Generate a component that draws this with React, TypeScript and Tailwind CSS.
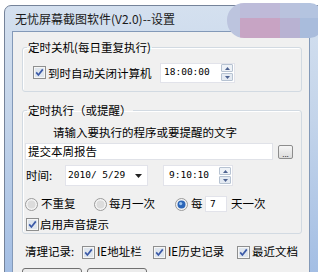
import React from 'react';

const cjk = { fontFamily: '"Noto Sans CJK SC", "Noto Sans", sans-serif' };
const mono = { fontFamily: '"DejaVu Sans Mono", "Liberation Mono", monospace' };

// Win7-style checked checkbox
function Check() {
  return (
    <svg width="13" height="13" viewBox="0 0 13 13" className="shrink-0">
      <rect x="0.5" y="0.5" width="12" height="12" fill="#f6f6f6" stroke="#8e8f8f" />
      <rect x="2" y="2" width="9" height="9" fill="#dfe6ee" />
      <path d="M3.2 6.4 L5.4 9 L9.8 3.4" stroke="#3b5aa8" strokeWidth="1.7" fill="none" />
    </svg>
  );
}

function Radio({ on = false }: { on?: boolean }) {
  return (
    <svg width="13" height="13" viewBox="0 0 13 13" className="shrink-0">
      <circle cx="6.5" cy="6.5" r="6" fill="#f4f4f4" stroke="#9a9a9a" />
      {on ? (
        <>
          <circle cx="6.5" cy="6.5" r="4" fill="#2c66b8" />
          <circle cx="5.7" cy="5.6" r="1.6" fill="#9cc4ee" />
        </>
      ) : (
        <circle cx="6.5" cy="6.5" r="4" fill="#dcdcdc" />
      )}
    </svg>
  );
}

function Spinner() {
  return (
    <div className="flex flex-col gap-[1px] w-[12px] shrink-0">
      <div className="h-[8px] border border-[#b7c3d2] bg-[#eef2f7] rounded-[1px] flex items-center justify-center">
        <svg width="5" height="3" viewBox="0 0 5 3"><path d="M0 3 L2.5 0 L5 3 Z" fill="#4d6290" /></svg>
      </div>
      <div className="h-[8px] border border-[#b7c3d2] bg-[#e4eaf2] rounded-[1px] flex items-center justify-center">
        <svg width="5" height="3" viewBox="0 0 5 3"><path d="M0 0 L2.5 3 L5 0 Z" fill="#4d6290" /></svg>
      </div>
    </div>
  );
}

export default function App() {
  return (
    <div className="w-[318px] h-[272px] bg-white overflow-hidden relative text-black" style={cjk}>
      <div className="ml-[4px] mt-[5px] w-[324px] h-[290px] rounded-t-[7px] border border-[#75839a] bg-[linear-gradient(180deg,#d4e0ef_0%,#c3d4ea_40%,#9fbbe3_100%)] flex flex-col">
        {/* title bar */}
        <div className="h-[25px] pl-[10px] pt-[1px] flex items-center text-[12px] leading-none text-[#1a1a1a]">
          无忧屏幕截图软件(V2.0)--设置
        </div>

        {/* client area */}
        <div className="ml-[7px] w-[298px] flex-1 border border-[#8399b8] bg-[#f0f0f0] flex flex-col text-[11.5px]">
          {/* group 1 */}
          <fieldset className="ml-[9px] mt-[9px] w-[280px] rounded-[3px] border border-[#d2dae2] shadow-[inset_1px_1px_0_#ffffff] px-0">
            <legend className="ml-[4px] px-[1px] leading-[12px]">定时关机(每日重复执行)</legend>
            <div className="pl-[10px] pt-[9px] pb-[8px] flex items-center h-[38px]">
              <Check />
              <span className="ml-[2px] w-[112px] leading-[14px]">到时自动关闭计算机</span>
              <div className="w-[75px] h-[20px] bg-white border border-[#e2e3ea] flex items-center pl-[3px] pr-[1px]">
                <span className="flex-1 text-[9.5px]" style={mono}>18:00:00</span>
                <Spinner />
              </div>
            </div>
          </fieldset>

          {/* group 2 */}
          <fieldset className="ml-[9px] mt-[12px] w-[280px] rounded-[3px] border border-[#d2dae2] shadow-[inset_1px_1px_0_#ffffff] px-0">
            <legend className="ml-[4px] px-[1px] leading-[12px]">定时执行（或提醒）</legend>
            <div className="flex flex-col pl-[2px] pb-[2px]">
              <div className="mt-[9px] pl-[28px] leading-[14px]">请输入要执行的程序或要提醒的文字</div>
              <div className="mt-[4px] flex items-center h-[17px]">
                <div className="w-[248px] h-[17px] bg-white border border-[#e0e2e8] pl-[2px] flex items-center leading-none">提交本周报告</div>
                <div className="ml-[5px] w-[15px] h-[14px] rounded-[2px] border border-[#8d8d8d] bg-[linear-gradient(180deg,#f6f6f6,#dcdcdc)] flex items-end justify-center text-[8px] leading-[9px] text-[#333]">...</div>
              </div>
              <div className="mt-[5px] flex items-center h-[21px]">
                <span className="ml-[1px] w-[39px]">时间:</span>
                <div className="w-[83px] h-[21px] bg-white border border-[#e2e3ea] flex items-center pl-[2px] pr-[5px]">
                  <span className="flex-1 text-[9.5px] whitespace-pre" style={mono}>2010/ 5/29</span>
                  <svg width="7" height="4" viewBox="0 0 7 4"><path d="M0 0 L7 0 L3.5 4 Z" fill="#222" /></svg>
                </div>
                <div className="ml-[15px] w-[70px] h-[21px] bg-white border border-[#e2e3ea] flex items-center pl-[5px] pr-[1px]">
                  <span className="flex-1 text-[9.5px]" style={mono}>9:10:10</span>
                  <Spinner />
                </div>
              </div>
              <div className="mt-[10px] flex items-center h-[16px]">
                <Radio />
                <span className="ml-[3px] w-[53px]">不重复</span>
                <Radio />
                <span className="ml-[2px] w-[66px]">每月一次</span>
                <Radio on />
                <span className="ml-[3px] w-[14px]">每</span>
                <div className="w-[22px] h-[16px] bg-white border border-[#e2e3ea] pl-[4px] text-[9.5px] leading-[14px]" style={mono}>7</div>
                <span className="ml-[4px]">天一次</span>
              </div>
              <div className="mt-[6px] flex items-center h-[13px] pl-[1px]">
                <Check />
                <span className="ml-[1px] leading-[13px]">启用声音提示</span>
              </div>
            </div>
          </fieldset>

          {/* clean records */}
          <div className="mt-[11px] ml-[12px] flex items-center h-[14px]">
            <span className="w-[57px]">清理记录:</span>
            <Check />
            <span className="ml-[2px] w-[56px]">IE地址栏</span>
            <Check />
            <span className="ml-[2px] w-[69px]">IE历史记录</span>
            <Check />
            <span className="ml-[2px]">最近文档</span>
          </div>

          <div className="mt-[9px] ml-[9px] flex gap-[5px]">
            <div className="w-[60px] h-[22px] rounded-[3px] border border-[#707070] bg-[#ececec]" />
            <div className="w-[60px] h-[22px] rounded-[3px] border border-[#707070] bg-[#ececec]" />
          </div>
        </div>
      </div>

      {/* mosaic blur over the caption buttons */}
      <div className="absolute left-[227px] top-[3px] w-[95px] h-[35px] flex rounded-l-[17px] rounded-r-[12px] overflow-hidden">
        <div className="w-[13px] bg-[#bcc4de]" />
        <div className="w-[20px] flex flex-col">
          <div className="h-[15px] bg-[#bdbcda]" />
          <div className="flex-1 bg-[#c7a4c4]" />
        </div>
        <div className="w-[20px] flex flex-col">
          <div className="h-[15px] bg-[#bfb9d8]" />
          <div className="flex-1 bg-[#c8a3c3]" />
        </div>
        <div className="w-[20px] flex flex-col">
          <div className="h-[15px] bg-[#b9c2dd]" />
          <div className="flex-1 bg-[#b8b2d2]" />
        </div>
        <div className="flex-1 flex flex-col">
          <div className="h-[15px] bg-[#b4c4e0]" />
          <div className="flex-1 bg-[#a9bcdc]" />
        </div>
      </div>
    </div>
  );
}
